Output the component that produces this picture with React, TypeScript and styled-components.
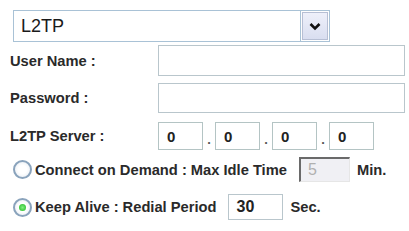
import styled, { createGlobalStyle } from "styled-components";

const GlobalStyle = createGlobalStyle`
  html, body {
    margin: 0;
    padding: 0;
    background: #ffffff;
  }
  body {
    font-family: "Liberation Sans", Arial, sans-serif;
    color: #222;
  }
`;

const Panel = styled.div`
  width: 409px;
  height: 231px;
  box-sizing: border-box;
  padding: 10px 0 0 8px;
  display: flex;
  flex-direction: column;
`;

const SelectBox = styled.div`
  margin-left: 5px;
  width: 317px;
  height: 32px;
  box-sizing: border-box;
  display: flex;
  border: 1px solid #a9c2d6;
  background: #fff;
`;

const SelectValue = styled.div`
  flex: 1;
  display: flex;
  align-items: center;
  padding-left: 7px;
  font-size: 18px;
  color: #1a1a1a;
  border-right: 1px solid #a9c2d6;
`;

const DropButton = styled.div`
  width: 24px;
  margin: 1px;
  display: flex;
  align-items: center;
  justify-content: center;
  background: linear-gradient(#eef0fa, #d9def0);
  border: 1px solid #b7bfd4;
`;

const Grid = styled.div`
  display: grid;
  grid-template-columns: 150px 1fr;
  grid-template-rows: 31px 30px 28px;
  row-gap: 7px;
  margin-top: 3px;
  align-items: center;
  & > :nth-child(5),
  & > :nth-child(6) {
    margin-top: 4px;
  }
`;

const Label = styled.div`
  font-size: 14.7px;
  font-weight: bold;
  color: #2a2a2a;
  padding-left: 2px;
`;

const TextBox = styled.div<{ $h: number }>`
  width: 247px;
  height: ${(p) => p.$h}px;
  box-sizing: border-box;
  border: 1px solid #b9c6cc;
  background: #fff;
`;

const IpRow = styled.div`
  display: flex;
  align-items: flex-end;
`;

const Octet = styled.div`
  width: 45px;
  height: 28px;
  box-sizing: border-box;
  border: 1px solid #b4c4c4;
  display: flex;
  align-items: center;
  padding-left: 8px;
  font-size: 15px;
  font-weight: bold;
  color: #222;
`;

const Dot = styled.span`
  width: 12px;
  text-align: center;
  font-size: 13px;
  font-weight: bold;
  color: #555;
  line-height: 20px;
`;

const RadioRow = styled.div<{ $top: number }>`
  display: flex;
  align-items: center;
  margin-top: ${(p) => p.$top}px;
  padding-left: 5px;
  font-size: 14.7px;
  font-weight: bold;
  color: #2a2a2a;
`;

const Radio = styled.span<{ $on?: boolean }>`
  width: 19px;
  height: 19px;
  box-sizing: border-box;
  border-radius: 50%;
  border: 2px solid #8aa3bc;
  background: radial-gradient(circle, #ffffff 40%, #e3e9f0 100%);
  display: flex;
  align-items: center;
  justify-content: center;
  margin-right: 3px;
  &::after {
    content: "";
    width: 7px;
    height: 7px;
    border-radius: 50%;
    background: ${(p) => (p.$on ? "radial-gradient(circle, #7ef07e, #1fb51f)" : "transparent")};
  }
`;

const SmallBox = styled.div<{ $disabled?: boolean; $w: number; $h: number }>`
  width: ${(p) => p.$w}px;
  height: ${(p) => p.$h}px;
  box-sizing: border-box;
  margin: 0 7px 0 12px;
  display: flex;
  align-items: center;
  padding-left: 7px;
  font-size: 16px;
  font-weight: ${(p) => (p.$disabled ? "normal" : "bold")};
  color: ${(p) => (p.$disabled ? "#b0b0b0" : "#222")};
  background: ${(p) => (p.$disabled ? "#f0f0f4" : "#fff")};
  border: 1px solid #b9c6cc;
  ${(p) =>
    p.$disabled &&
    `border-top: 2px solid #6a6a6a; border-left: 2px solid #6a6a6a; border-right-color: #e6e6e6; border-bottom-color: #e6e6e6;`}
`;

export default function App() {
  return (
    <>
      <GlobalStyle />
      <Panel>
        <SelectBox>
          <SelectValue>L2TP</SelectValue>
          <DropButton>
            <svg width="12" height="9" viewBox="0 0 12 9">
              <path d="M1.5 2 L6 6.5 L10.5 2" fill="none" stroke="#111" strokeWidth="2.6" />
            </svg>
          </DropButton>
        </SelectBox>
        <Grid>
          <Label>User Name :</Label>
          <TextBox $h={31} />
          <Label>Password :</Label>
          <TextBox $h={30} />
          <Label>L2TP Server :</Label>
          <IpRow>
            <Octet>0</Octet>
            <Dot>.</Dot>
            <Octet>0</Octet>
            <Dot>.</Dot>
            <Octet>0</Octet>
            <Dot>.</Dot>
            <Octet>0</Octet>
          </IpRow>
        </Grid>
        <RadioRow $top={9}>
          <Radio />
          Connect on Demand : Max Idle Time
          <SmallBox $disabled $w={51} $h={25}>5</SmallBox>
          Min.
        </RadioRow>
        <RadioRow $top={12}>
          <Radio $on />
          Keep Alive : Redial Period
          <SmallBox $w={55} $h={26}>30</SmallBox>
          Sec.
        </RadioRow>
      </Panel>
    </>
  );
}
